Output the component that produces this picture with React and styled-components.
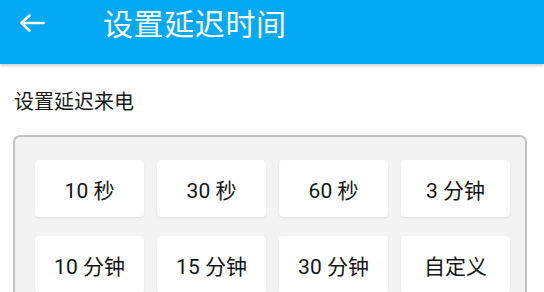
import styled, { createGlobalStyle } from "styled-components";

const GlobalStyle = createGlobalStyle`
  body {
    margin: 0;
    background: #ffffff;
    font-family: Roboto, "Noto Sans CJK SC", sans-serif;
  }
`;

const Header = styled.header`
  height: 64px;
  box-sizing: border-box;
  background: #03a9f4;
  display: flex;
  align-items: flex-start;
  padding: 0 0 0 19px;
  box-shadow: 0 2px 3px rgba(0, 0, 0, 0.18);
`;

const HeaderRow = styled.div`
  height: 44px;
  display: flex;
  align-items: center;
`;

const BackButton = styled.button`
  border: none;
  background: none;
  padding: 0;
  width: 26px;
  height: 18px;
  display: flex;
  margin-top: 2px;
  cursor: pointer;
`;

const Title = styled.h1`
  margin: 0 0 0 58px;
  font-size: 30px;
  font-weight: 400;
  color: #ffffff;
  letter-spacing: 0.6px;
`;

const Content = styled.main`
  padding: 26px 17px 0 13px;
`;

const SectionLabel = styled.div`
  font-size: 20px;
  line-height: 24px;
  color: #1a1a1a;
  padding-left: 1px;
  margin-bottom: 21px;
`;

const Card = styled.section`
  background: #f3f3f3;
  border: 2px solid #c2c2c2;
  border-radius: 7px;
  padding: 23px 0 30px 20px;
  display: grid;
  grid-template-columns: repeat(4, 109px);
  column-gap: 13px;
  row-gap: 19px;
`;

const Option = styled.button`
  height: 57px;
  border: none;
  border-radius: 4px;
  background: #ffffff;
  box-shadow: 0 1px 2px rgba(0, 0, 0, 0.08);
  font-family: Roboto, "Noto Sans CJK SC", sans-serif;
  font-size: 21px;
  font-weight: 400;
  color: #141414;
  padding: 0;
  cursor: pointer;
`;

const options = [
  "10 秒",
  "30 秒",
  "60 秒",
  "3 分钟",
  "10 分钟",
  "15 分钟",
  "30 分钟",
  "自定义",
];

function BackArrow() {
  return (
    <svg width="26" height="18" viewBox="0 0 26 18" fill="none">
      <path
        d="M2.5 9H24.5M10.5 1.5L2.5 9L10.5 16.5"
        stroke="#ffffff"
        strokeWidth="2.6"
        strokeLinecap="round"
        strokeLinejoin="round"
      />
    </svg>
  );
}

export default function App() {
  return (
    <>
      <GlobalStyle />
      <Header>
        <HeaderRow>
          <BackButton aria-label="返回">
            <BackArrow />
          </BackButton>
          <Title>设置延迟时间</Title>
        </HeaderRow>
      </Header>
      <Content>
        <SectionLabel>设置延迟来电</SectionLabel>
        <Card>
          {options.map((label) => (
            <Option key={label}>{label}</Option>
          ))}
        </Card>
      </Content>
    </>
  );
}
